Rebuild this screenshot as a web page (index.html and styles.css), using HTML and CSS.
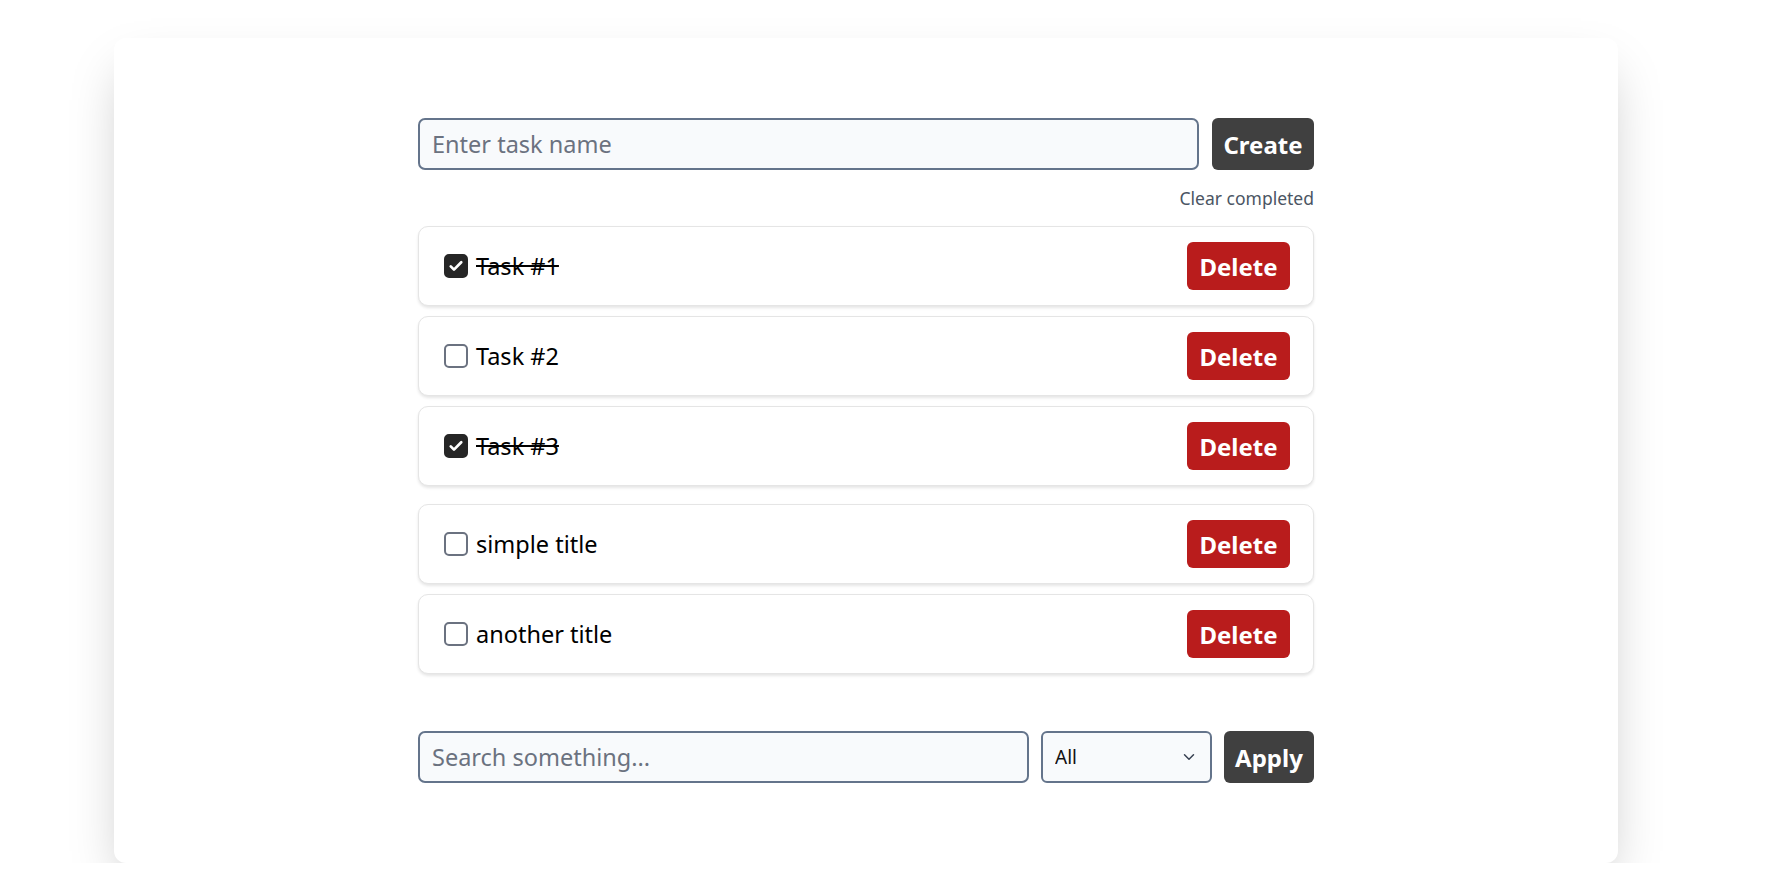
FILE: index.html
```html
<!DOCTYPE html>
<html lang="en">
<head>
<meta charset="utf-8">
<title>Tasks</title>
<link rel="stylesheet" href="styles.css">
</head>
<body>
<main class="card">
  <div class="column">
    <form class="create-row">
      <input class="text-input" type="text" placeholder="Enter task name">
      <button class="btn btn-dark btn-create" type="button">Create</button>
    </form>
    <div class="clear-row"><span class="clear-link">Clear completed</span></div>

    <ul class="task-list">
      <li class="task">
        <label class="task-label">
          <span class="check checked"><svg viewBox="0 0 24 24" width="18" height="18"><path d="M5 12.5l4.3 4.3L19 7" fill="none" stroke="#fff" stroke-width="3.6" stroke-linecap="round" stroke-linejoin="round"/></svg></span>
          <span class="task-title done">Task #1</span>
        </label>
        <button class="btn btn-red" type="button">Delete</button>
      </li>
      <li class="task">
        <label class="task-label">
          <span class="check"></span>
          <span class="task-title">Task #2</span>
        </label>
        <button class="btn btn-red" type="button">Delete</button>
      </li>
      <li class="task">
        <label class="task-label">
          <span class="check checked"><svg viewBox="0 0 24 24" width="18" height="18"><path d="M5 12.5l4.3 4.3L19 7" fill="none" stroke="#fff" stroke-width="3.6" stroke-linecap="round" stroke-linejoin="round"/></svg></span>
          <span class="task-title done">Task #3</span>
        </label>
        <button class="btn btn-red" type="button">Delete</button>
      </li>
    </ul>

    <ul class="task-list second">
      <li class="task">
        <label class="task-label">
          <span class="check"></span>
          <span class="task-title">simple title</span>
        </label>
        <button class="btn btn-red" type="button">Delete</button>
      </li>
      <li class="task">
        <label class="task-label">
          <span class="check"></span>
          <span class="task-title">another title</span>
        </label>
        <button class="btn btn-red" type="button">Delete</button>
      </li>
    </ul>

    <form class="search-row">
      <input class="text-input search-input" type="text" placeholder="Search something...">
      <div class="select-wrap">
        <select class="select">
          <option>All</option>
          <option>Completed</option>
          <option>Active</option>
        </select>
        <svg class="chevron" viewBox="0 0 24 24" width="18" height="18"><path d="M6 9l6 6 6-6" fill="none" stroke="#374151" stroke-width="2" stroke-linecap="round" stroke-linejoin="round"/></svg>
      </div>
      <button class="btn btn-dark btn-apply" type="button">Apply</button>
    </form>
  </div>
</main>
</body>
</html>
```

FILE: styles.css
```css
* { box-sizing: border-box; }

html, body {
  margin: 0;
  padding: 0;
  background: #ffffff;
  font-family: "Noto Sans", "Open Sans", sans-serif;
  color: #111111;
}

.card {
  margin: 38px 0 0 114px;
  width: 1504px;
  height: 825px;
  background: #ffffff;
  border-radius: 12px;
  box-shadow: 0 25px 50px -12px rgba(0, 0, 0, 0.25);
  padding: 80px 0 0;
  display: flex;
  justify-content: center;
}

.column {
  width: 896px;
  display: flex;
  flex-direction: column;
}

.create-row, .search-row {
  display: flex;
  gap: 13px;
  margin: 0;
}

.text-input {
  flex: 1;
  height: 52px;
  border: 2px solid #64748b;
  border-radius: 7px;
  background: #f8fafc;
  padding: 0 12px;
  font-family: inherit;
  font-size: 23.5px;
  color: #111;
  outline: none;
}

.text-input::placeholder { color: #6b7280; }

.btn {
  border: none;
  border-radius: 6px;
  color: #ffffff;
  font-family: inherit;
  font-weight: 700;
  font-size: 24px;
  cursor: pointer;
  padding: 0;
}

.btn-dark { background: #404040; }
.btn-create { width: 102px; height: 52px; }
.btn-apply { width: 90px; height: 52px; }

.clear-row {
  display: flex;
  justify-content: flex-end;
  margin: 16px 0 16px;
  line-height: 24px;
}

.clear-link {
  font-size: 17.5px;
  color: #4b5563;
}

.task-list {
  list-style: none;
  margin: 0;
  padding: 0;
  display: flex;
  flex-direction: column;
  gap: 10px;
}

.task-list.second { margin-top: 18px; }

.task {
  height: 80px;
  display: flex;
  align-items: center;
  justify-content: space-between;
  padding: 0 23px 0 25px;
  border: 1px solid #e5e5e5;
  border-radius: 10px;
  box-shadow: 0 2px 3px rgba(0, 0, 0, 0.10);
  background: #fff;
}

.task-label {
  display: flex;
  align-items: center;
  gap: 8px;
}

.check {
  width: 24px;
  height: 24px;
  border: 2px solid #6b7280;
  border-radius: 5px;
  display: flex;
  align-items: center;
  justify-content: center;
  background: #fff;
}

.check.checked {
  background: #262626;
  border-color: #262626;
}

.task-title {
  font-size: 23.5px;
  color: #000;
}

.task-title.done { text-decoration: line-through; }

.btn-red {
  background: #b91c1c;
  width: 103px;
  height: 48px;
}

.search-row {
  margin-top: 57px;
  gap: 12px;
}

.search-input { flex: 0 0 611px; }

.select-wrap {
  position: relative;
  width: 171px;
  height: 52px;
}

.select {
  appearance: none;
  -webkit-appearance: none;
  width: 100%;
  height: 100%;
  border: 2px solid #64748b;
  border-radius: 6px;
  background: #f8fafc;
  padding: 0 12px;
  font-family: inherit;
  font-size: 19px;
  color: #111;
}

.chevron {
  position: absolute;
  right: 14px;
  top: 17px;
  pointer-events: none;
}
```
